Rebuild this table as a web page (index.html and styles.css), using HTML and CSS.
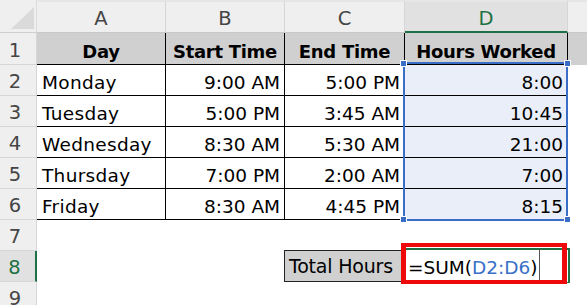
FILE: index.html
```html
<!DOCTYPE html>
<html>
<head>
<meta charset="utf-8">
<link rel="stylesheet" href="styles.css">
</head>
<body>
<div class="sheet">
  <div class="corner"><svg width="36" height="32" viewBox="0 0 36 32"><polygon points="34,7 34,29 11,29" fill="#dadada"/></svg></div>
  <div class="colhead">A</div>
  <div class="colhead">B</div>
  <div class="colhead">C</div>
  <div class="colhead sel">D</div>
  <div class="colhead end"></div>

  <div class="rowhead">1</div>
  <div class="cell th">Day</div>
  <div class="cell th">Start Time</div>
  <div class="cell th">End Time</div>
  <div class="cell th">Hours Worked</div>
  <div class="cell efill"></div>

  <div class="rowhead">2</div>
  <div class="cell">Monday</div>
  <div class="cell num">9:00 AM</div>
  <div class="cell num">5:00 PM</div>
  <div class="cell num dsel">8:00</div>
  <div class="blank"></div>

  <div class="rowhead">3</div>
  <div class="cell">Tuesday</div>
  <div class="cell num">5:00 PM</div>
  <div class="cell num">3:45 AM</div>
  <div class="cell num dsel">10:45</div>
  <div class="blank"></div>

  <div class="rowhead">4</div>
  <div class="cell">Wednesday</div>
  <div class="cell num">8:30 AM</div>
  <div class="cell num">5:30 AM</div>
  <div class="cell num dsel">21:00</div>
  <div class="blank"></div>

  <div class="rowhead">5</div>
  <div class="cell">Thursday</div>
  <div class="cell num">7:00 PM</div>
  <div class="cell num">2:00 AM</div>
  <div class="cell num dsel">7:00</div>
  <div class="blank"></div>

  <div class="rowhead">6</div>
  <div class="cell">Friday</div>
  <div class="cell num">8:30 AM</div>
  <div class="cell num">4:45 PM</div>
  <div class="cell num dsel">8:15</div>
  <div class="blank"></div>

  <div class="rowhead">7</div>
  <div class="blank"></div>
  <div class="blank"></div>
  <div class="blank"></div>
  <div class="blank"></div>
  <div class="blank"></div>

  <div class="rowhead active-row">8</div>
  <div class="blank"></div>
  <div class="blank"></div>
  <div class="total">Total Hours</div>
  <div class="edit"><span>=SUM(</span><span class="ref">D2:D6</span><span>)</span><i class="caret"></i></div>
  <div class="blank"></div>

  <div class="rowhead">9</div>
  <div class="blank"></div>
  <div class="blank"></div>
  <div class="blank"></div>
  <div class="blank"></div>
  <div class="blank"></div>

  <div class="selection">
    <i class="h tl"></i><i class="h tr"></i><i class="h bl"></i><i class="h br"></i>
  </div>
  <div class="active-cell"></div>
  <div class="redbox"></div>
</div>
</body>
</html>
```

FILE: styles.css
```css
html, body {
  margin: 0;
  padding: 0;
  background: #ffffff;
  overflow: hidden;
}

.sheet {
  position: relative;
  display: grid;
  grid-template-columns: 37px 129px 119px 120px 163px 19px;
  grid-template-rows: 33px 32px repeat(8, 31px);
  width: 587px;
  height: 305px;
  overflow: hidden;
  font-family: "DejaVu Sans", sans-serif;
  font-size: 18px;
  color: #000;
}

.sheet > div {
  box-sizing: border-box;
  min-width: 0;
}

.corner {
  background: #efefef;
  border-right: 1px solid #dcdcdc;
  border-bottom: 1px solid #cfcfcf;
  display: flex;
}

.corner svg {
  display: block;
}

.colhead {
  background: #efefef;
  border-top: 2px solid #e6e6e6;
  border-right: 1px solid #d6d6d6;
  border-bottom: 1px solid #c9c9c9;
  display: flex;
  align-items: center;
  justify-content: center;
  padding-top: 3px;
  color: #454545;
  font-size: 19.5px;
}

.colhead.sel {
  background: #e1e1e1;
  color: #1e7145;
  border-bottom: 2px solid #1e7145;
}

.colhead.end {
  border-right: none;
}

.rowhead {
  background: #efefef;
  border-right: 1px solid #d6d6d6;
  border-bottom: 1px solid #d6d6d6;
  display: flex;
  align-items: flex-end;
  justify-content: center;
  padding-right: 6px;
  line-height: 26px;
  color: #454545;
  font-size: 19.5px;
}

.rowhead.active-row {
  background: #e1e1e1;
  color: #1e7145;
  border-right: 2px solid #1e7145;
}

.cell {
  border-right: 1px solid #000;
  border-bottom: 1px solid #000;
  display: flex;
  align-items: flex-end;
  line-height: 25px;
  padding: 0 4px 0 5px;
  white-space: nowrap;
  overflow: hidden;
  letter-spacing: 0.3px;
  font-size: 18.5px;
}

.th {
  background: #d0d0d0;
  font-weight: bold;
  justify-content: center;
  padding: 0 2px;
  letter-spacing: -0.3px;
  font-size: 18px;
}

.efill {
  background: #d0d0d0;
  border: none;
}

.num {
  justify-content: flex-end;
  letter-spacing: 0;
}

.dsel {
  background: #e9eef8;
}

.blank {
  background: #fff;
}

.total {
  margin-left: -1px;
  margin-top: -1px;
  background: #d0d0d0;
  border: 1px solid #222;
  border-right: none;
  display: flex;
  align-items: flex-end;
  line-height: 29px;
  padding-left: 4px;
  font-size: 19px;
  letter-spacing: -0.2px;
  white-space: nowrap;
}

.edit {
  background: #fff;
  display: flex;
  align-items: flex-end;
  line-height: 29px;
  padding-left: 3px;
  font-size: 18.5px;
  white-space: nowrap;
  position: relative;
  z-index: 3;
  margin-top: -1px;
}

.edit .ref {
  color: #3a6fc8;
}

.caret {
  display: block;
  width: 1px;
  height: 33px;
  background: #555;
  margin-left: 2px;
  align-self: flex-end;
}

.selection {
  position: absolute;
  left: 403px;
  top: 62px;
  width: 165px;
  height: 159px;
  border: 2px solid #3a6ec6;
  z-index: 2;
}

.h {
  position: absolute;
  width: 5px;
  height: 5px;
  background: #3a6ec6;
  box-shadow: 0 0 0 1px #fff;
}

.h.tl { left: -4px; top: -3px; }
.h.tr { right: -4px; top: -3px; }
.h.bl { left: -4px; bottom: -3px; }
.h.br { right: -4px; bottom: -3px; }

.active-cell {
  position: absolute;
  left: 402px;
  top: 248px;
  width: 168px;
  height: 35px;
  border: 2px solid #1e7145;
  z-index: 2;
}

.redbox {
  position: absolute;
  left: 401px;
  top: 243px;
  width: 166px;
  height: 41px;
  border-style: solid;
  border-color: #ee0a0a;
  border-width: 4px 5px;
  z-index: 4;
}
```
